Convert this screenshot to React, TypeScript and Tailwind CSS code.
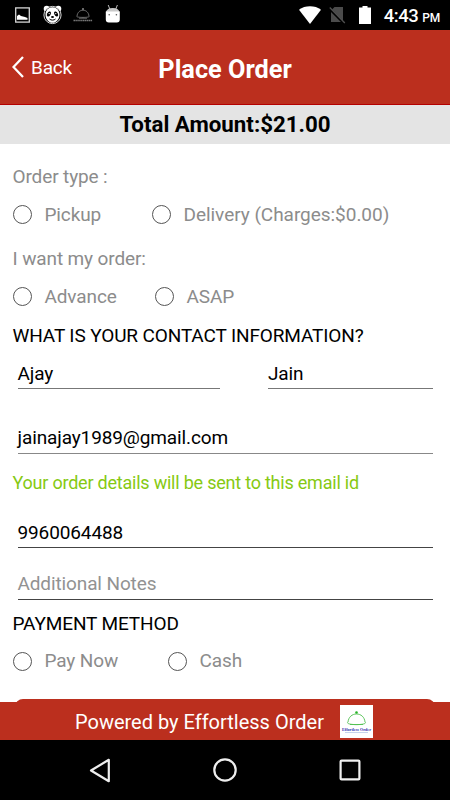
import React from 'react';
import clsx from 'clsx';

interface RadioProps {
  label: string;
  className?: string;
}

const Radio: React.FC<RadioProps> = ({ label, className }) => (
  <label className={clsx('flex items-center gap-[13px] text-[#8c8c8c]', className)}>
    <span className="-mt-px h-[19px] w-[19px] shrink-0 rounded-full border border-[#555555]" />
    <span className="whitespace-nowrap">{label}</span>
  </label>
);

interface FieldProps {
  value?: string;
  placeholder?: string;
  className?: string;
}

const Field: React.FC<FieldProps> = ({ value, placeholder, className }) => (
  <div className={clsx('flex items-end border-b leading-6', className)}>
    <span className={value ? 'text-black' : 'text-[#929292]'}>{value || placeholder}</span>
  </div>
);

const StatusBar: React.FC = () => (
  <div className="flex h-[30px] shrink-0 items-center justify-between bg-black pl-[15px] pr-[10px] text-white">
    <div className="flex items-center">
      <svg width="15" height="16" viewBox="0 0 15 16">
        <rect x="0.7" y="0.9" width="13.6" height="14.2" fill="none" stroke="#d6d6d6" strokeWidth="1.3" />
        <path d="M2 12.8V9l2-1.6 2 1.6 2 .4 2 .6 2.5 1v1.8z" fill="#fff" />
      </svg>
      {/* panda */}
      <svg className="ml-[13px]" width="19" height="20" viewBox="0 0 19 20">
        <circle cx="3.7" cy="3.7" r="3" fill="#fff" />
        <circle cx="15.3" cy="3.7" r="3" fill="#fff" />
        <circle cx="9.5" cy="10" r="8.6" fill="#000" stroke="#eee" strokeWidth="0.9" />
        <path d="M9.5 2.2c4.2 0 7 3.2 7 7.2 0 5-3.5 8.4-7 8.4s-7-3.4-7-8.4c0-4 2.8-7.2 7-7.2z" fill="#fff" />
        <ellipse cx="5.9" cy="9" rx="1.8" ry="2.7" fill="#000" transform="rotate(28 5.9 9)" />
        <ellipse cx="13.1" cy="9" rx="1.8" ry="2.7" fill="#000" transform="rotate(-28 13.1 9)" />
        <circle cx="6.2" cy="8.6" r="0.7" fill="#fff" />
        <circle cx="12.8" cy="8.6" r="0.7" fill="#fff" />
        <ellipse cx="9.5" cy="12" rx="1.5" ry="1" fill="#000" />
        <path d="M6.5 14c1.5 1.5 4.5 1.5 6 0" fill="none" stroke="#000" strokeWidth="1" />
      </svg>
      <svg className="ml-[11px]" width="20" height="16" viewBox="0 0 20 16">
        <path d="M4 9.200c.3-3.600 2.800-6 6-6s5.700 2.400 6 6M4 9.200c-2.200 1.600 14.200 1.600 12 0M6 11.200h8" fill="none" stroke="#777" strokeWidth="0.9" />
        <circle cx="10" cy="2" r="1" fill="#888" />
        <path d="M0.5 13.5h19" stroke="#777" strokeWidth="1.4" strokeDasharray="1.5 .4" />
      </svg>
      {/* android head */}
      <svg className="-mt-[2px] ml-[12px]" width="16" height="18" viewBox="0 0 16 18">
        <path d="M3.2 0l1.6 4M12.4 0l-1.6 4" stroke="#bbb" strokeWidth="1" />
        <path d="M.8 7.200c.8-2.600 3.300-4.200 7-4.200s6.200 1.600 7 4.200z" fill="#c8c8c8" />
        <path d="M.8 6.500h14v8q0 3-3 3h-8q-3 0-3-3z" fill="#fff" />
        <circle cx="4.2" cy="9.7" r="0.8" fill="#555" />
        <circle cx="11.4" cy="9.7" r="0.8" fill="#555" />
      </svg>
    </div>
    <div className="flex items-center">
      <svg width="22" height="18" viewBox="0 0 22 18">
        <path d="M0 3.800C3 1.200 7 .2 11 .2s8 1 11 3.600L11 18z" fill="#fff" />
      </svg>
      <svg className="ml-[8px]" width="17" height="18" viewBox="0 0 17 18">
        <path d="M5.5 1H14v15H2V4.5z" fill="#4b4b4b" />
        <path d="M0 2.200L14.500 17" stroke="#000" strokeWidth="2.5" />
        <path d="M.8 1.500L15.800 17" stroke="#505050" strokeWidth="1.3" />
      </svg>
      <svg className="ml-[13px]" width="12" height="18" viewBox="0 0 12 18">
        <path d="M0 1.500h3.500V0h5v1.500H12V18H0z" fill="#fff" />
      </svg>
      <span className="ml-[13px] flex items-baseline gap-[4px] pt-[2px] font-medium leading-none">
        <span className="text-[18.5px] tracking-[-0.5px]">4:43</span>
        <span className="text-[12px] tracking-[-0.2px]">PM</span>
      </span>
    </div>
  </div>
);

const Header: React.FC = () => (
  <div className="grid h-[75px] shrink-0 grid-cols-[1fr_auto_1fr] items-center border-b border-[#b40000] bg-[#bb2f1e] text-white">
    <button type="button" className="flex items-center gap-[7px] pl-[12px] pt-[2px] text-[19px] tracking-[-0.2px]">
      <svg className="-mt-[2px]" width="12" height="22" viewBox="0 0 12 22">
        <path d="M11 1L1.500 11 11 21" fill="none" stroke="currentColor" strokeWidth="2.3" />
      </svg>
      Back
    </button>
    <h1 className="pt-[5px] text-[25.3px] font-bold">Place Order</h1>
  </div>
);

const Footer: React.FC = () => (
  <div className="flex h-[38px] shrink-0 items-center bg-[#bb2f1e] pl-[75px] text-white">
    <span className="w-[250px] whitespace-nowrap pt-[1px] text-[20px]">Powered by Effortless Order</span>
    <svg className="ml-[15px]" width="33" height="33" viewBox="0 0 33 33">
      <rect width="33" height="33" fill="#fff" />
      <path d="M8 17c.6-5 4-8 8.500-8s8 3 8.500 8M8 17c-4 3.500 21 3.500 17 0M10 19.500h13" fill="none" stroke="#4fc04f" strokeWidth="0.9" />
      <circle cx="16.5" cy="7.5" r="1.3" fill="#27b327" />
      <text x="16.5" y="26" textAnchor="middle" textLength="29" lengthAdjust="spacingAndGlyphs" fill="#2a2aae" fontSize="4" fontWeight="bold" fontFamily="Liberation Serif, serif">Effortless Order</text>
      <path d="M5 27.500h23" stroke="#9fb6de" strokeWidth="0.6" />
    </svg>
  </div>
);

const NavBar: React.FC = () => (
  <div className="flex h-[60px] shrink-0 items-center justify-between bg-black px-[89px]">
    <svg width="22" height="25" viewBox="0 0 22 25">
      <path d="M19.800 1.800v21.400L2 12.500z" fill="none" stroke="#eee" strokeWidth="2.2" strokeLinejoin="round" />
    </svg>
    <svg width="24" height="24" viewBox="0 0 24 24">
      <circle cx="12" cy="12" r="10.7" fill="none" stroke="#eee" strokeWidth="2.2" />
    </svg>
    <svg width="22" height="22" viewBox="0 0 22 22">
      <rect x="1.6" y="1.6" width="18.8" height="18.8" rx="1" fill="none" stroke="#eee" strokeWidth="2.2" />
    </svg>
  </div>
);

const App: React.FC = () => (
  <div className="flex h-[800px] w-[450px] flex-col overflow-hidden bg-white font-['Roboto',sans-serif]">
    <StatusBar />
    <Header />
    <div className="flex h-[39px] shrink-0 items-center justify-center bg-[#e4e4e4] text-[22.3px] font-bold text-black">
      Total Amount:$21.00
    </div>
    <div className="flex h-[558px] shrink-0 flex-col overflow-hidden pl-[12.5px] pr-[13px] pt-5 text-[19px] tracking-[-0.12px]">
      <div className="flex h-[26px] shrink-0 items-center text-[#8c8c8c]">Order type :</div>
      <div className="flex h-[50px] shrink-0 items-center">
        <Radio label="Pickup" className="w-[139px]" />
        <Radio label="Delivery (Charges:$0.00)" className="tracking-[-0.04px]" />
      </div>
      <div className="flex h-[38px] shrink-0 items-center text-[#8c8c8c]">I want my order:</div>
      <div className="flex h-[38px] shrink-0 items-center">
        <Radio label="Advance" className="w-[142px]" />
        <Radio label="ASAP" />
      </div>
      <h2 className="flex h-[40px] shrink-0 items-center text-black">WHAT IS YOUR CONTACT INFORMATION?</h2>
      <div className="flex h-[33px] shrink-0 justify-between pl-[5px] pr-[4px]">
        <Field value="Ajay" className="w-[202px] border-[#777777] pb-[2px]" />
        <Field value="Jain" className="w-[165px] border-[#777777] pb-[2px]" />
      </div>
      <Field value="jainajay1989@gmail.com" className="ml-[5px] mr-[4px] h-[65px] shrink-0 border-[#888888] pb-[3px]" />
      <p className="flex h-[58px] shrink-0 items-center pb-[2px] text-[18px] tracking-[-0.22px] text-[#86c912]">
        Your order details will be sent to this email id
      </p>
      <Field value="9960064488" className="ml-[5px] mr-[4px] h-[36px] shrink-0 border-[#444444] pb-[2px]" />
      <Field placeholder="Additional Notes" className="ml-[5px] mr-[4px] h-[52px] shrink-0 border-[#444444] pb-[3px]" />
      <h2 className="flex h-[48px] shrink-0 items-center text-black">PAYMENT METHOD</h2>
      <div className="flex h-[27px] shrink-0 items-center">
        <Radio label="Pay Now" className="w-[155px]" />
        <Radio label="Cash" />
      </div>
      <div className="ml-[2px] mr-[2px] mt-[24px] h-[40px] shrink-0 rounded-[8px] bg-[#bb2f1e]" />
    </div>
    <Footer />
    <NavBar />
  </div>
);

export default App;
